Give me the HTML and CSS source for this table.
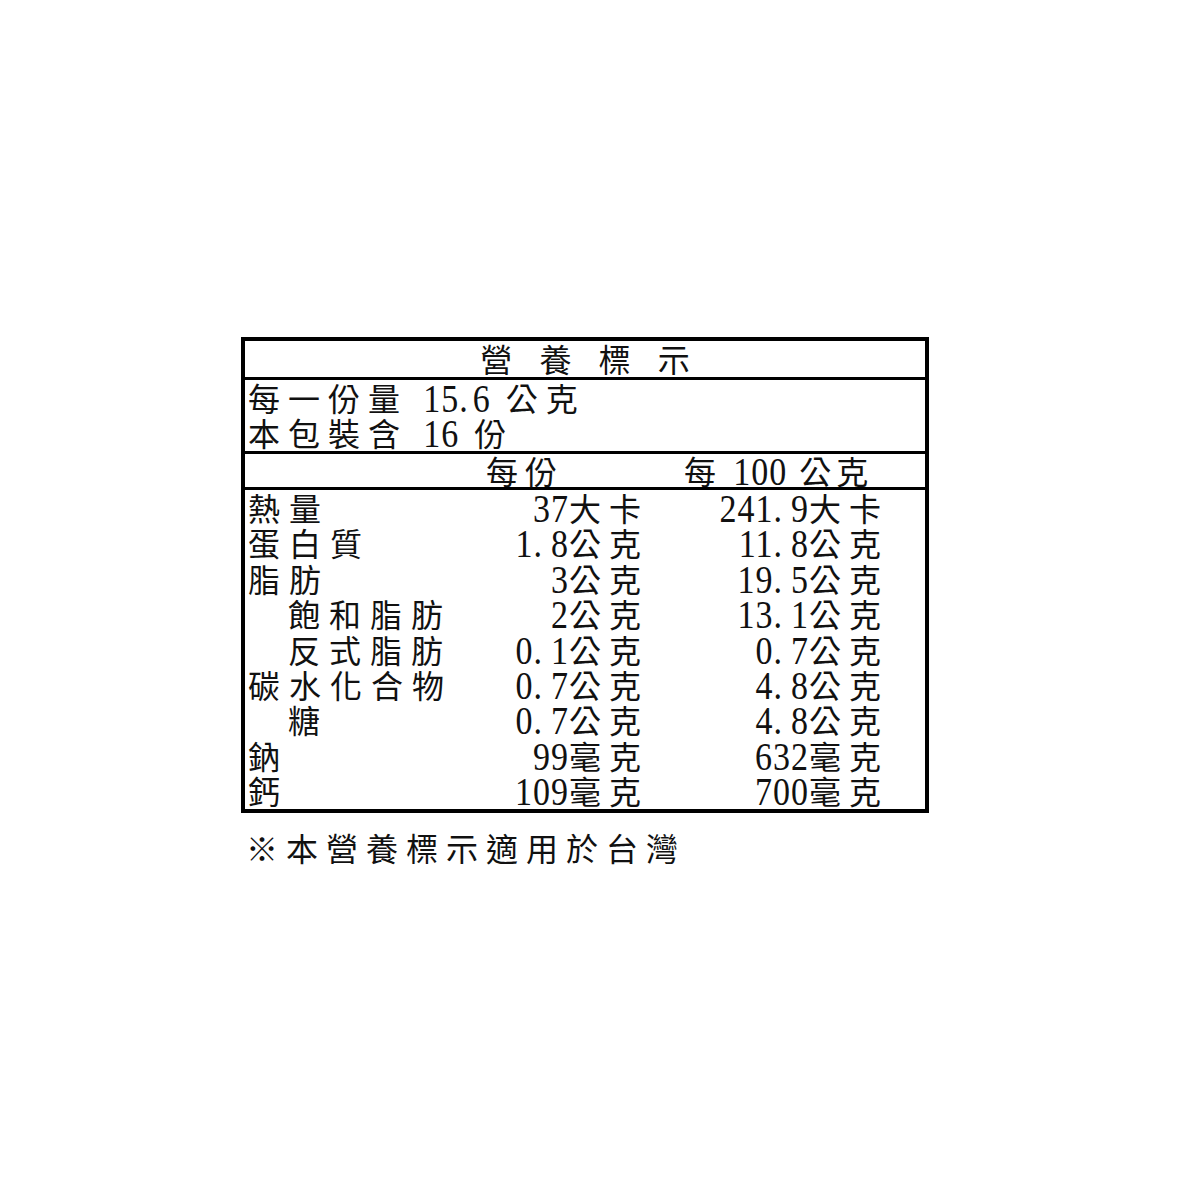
FILE: index.html
```html
<!DOCTYPE html>
<html lang="zh-Hant">
<head>
<meta charset="utf-8">
<title>營養標示</title>
<link rel="stylesheet" href="styles.css">
</head>
<body>
<div class="page">
  <div class="label">
    <div class="title">營 養 標 示</div>
    <div class="serving">
      <div class="line">每一份量 <span class="n">15<span class="d">.</span>6</span> 公克</div>
      <div class="line">本包裝含 <span class="n">16</span> 份</div>
    </div>
    <div class="head">
      <div class="cell"></div>
      <div class="cell h2">每份</div>
      <div class="cell h3">每 <span class="n">100</span> 公克</div>
    </div>
    <div class="rows">
      <div class="name">熱量</div><div class="val"><span class="n">37</span><span class="u">大卡</span></div><div class="val"><span class="n">241<span class="d">.</span>9</span><span class="u">大卡</span></div>
      <div class="name">蛋白質</div><div class="val"><span class="n">1<span class="d">.</span>8</span><span class="u">公克</span></div><div class="val"><span class="n">11<span class="d">.</span>8</span><span class="u">公克</span></div>
      <div class="name">脂肪</div><div class="val"><span class="n">3</span><span class="u">公克</span></div><div class="val"><span class="n">19<span class="d">.</span>5</span><span class="u">公克</span></div>
      <div class="name sub">飽和脂肪</div><div class="val"><span class="n">2</span><span class="u">公克</span></div><div class="val"><span class="n">13<span class="d">.</span>1</span><span class="u">公克</span></div>
      <div class="name sub">反式脂肪</div><div class="val"><span class="n">0<span class="d">.</span>1</span><span class="u">公克</span></div><div class="val"><span class="n">0<span class="d">.</span>7</span><span class="u">公克</span></div>
      <div class="name">碳水化合物</div><div class="val"><span class="n">0<span class="d">.</span>7</span><span class="u">公克</span></div><div class="val"><span class="n">4<span class="d">.</span>8</span><span class="u">公克</span></div>
      <div class="name sub">糖</div><div class="val"><span class="n">0<span class="d">.</span>7</span><span class="u">公克</span></div><div class="val"><span class="n">4<span class="d">.</span>8</span><span class="u">公克</span></div>
      <div class="name">鈉</div><div class="val"><span class="n">99</span><span class="u">毫克</span></div><div class="val"><span class="n">632</span><span class="u">毫克</span></div>
      <div class="name">鈣</div><div class="val"><span class="n">109</span><span class="u">毫克</span></div><div class="val"><span class="n">700</span><span class="u">毫克</span></div>
    </div>
  </div>
  <p class="note">※本營養標示適用於台灣</p>
</div>
</body>
</html>
```

FILE: styles.css
```css
html, body {
  margin: 0;
  padding: 0;
  background: #ffffff;
}

body {
  font-family: "Noto Sans CJK TC", "Noto Sans CJK SC", sans-serif;
  font-size: 32px;
  color: #111111;
}

.page {
  padding-top: 337px;
  padding-left: 241px;
}

.label {
  width: 680px;
  border: 4px solid #000000;
}

.title {
  height: 36px;
  line-height: 35px;
  text-align: center;
  letter-spacing: 10px;
  padding-left: 10px;
  border-bottom: 3px solid #000000;
}

.serving {
  height: 71px;
  padding-left: 3px;
  letter-spacing: 8px;
  border-bottom: 3px solid #000000;
}

.serving .line {
  height: 35px;
  line-height: 35px;
}

.serving .n {
  letter-spacing: 1px;
}

.serving .n .d {
  letter-spacing: 5px;
}

.n {
  display: inline-block;
  font-family: "Liberation Serif", serif;
  font-size: 34px;
  letter-spacing: 1px;
  transform: scaleY(1.18);
  transform-origin: 50% 70%;
}

.n .d {
  letter-spacing: 9px;
}

.head {
  display: grid;
  grid-template-columns: 212px 189px 240px;
  height: 33px;
  line-height: 33px;
  padding-left: 3px;
  border-bottom: 3px solid #000000;
}

.h2 {
  padding-left: 26px;
  letter-spacing: 7px;
}

.h3 {
  padding-left: 35px;
  letter-spacing: 5px;
  white-space: nowrap;
}

.rows {
  display: grid;
  grid-template-columns: 212px 189px 240px;
  grid-auto-rows: 35.4px;
  line-height: 35.4px;
  padding-left: 3px;
}

.name {
  letter-spacing: 9px;
  white-space: nowrap;
}

.name.sub {
  padding-left: 40px;
}

.val {
  text-align: right;
  white-space: nowrap;
}

.u {
  letter-spacing: 8px;
}

.note {
  margin: 14px 0 0 5px;
  line-height: 40px;
  letter-spacing: 8px;
}
```
